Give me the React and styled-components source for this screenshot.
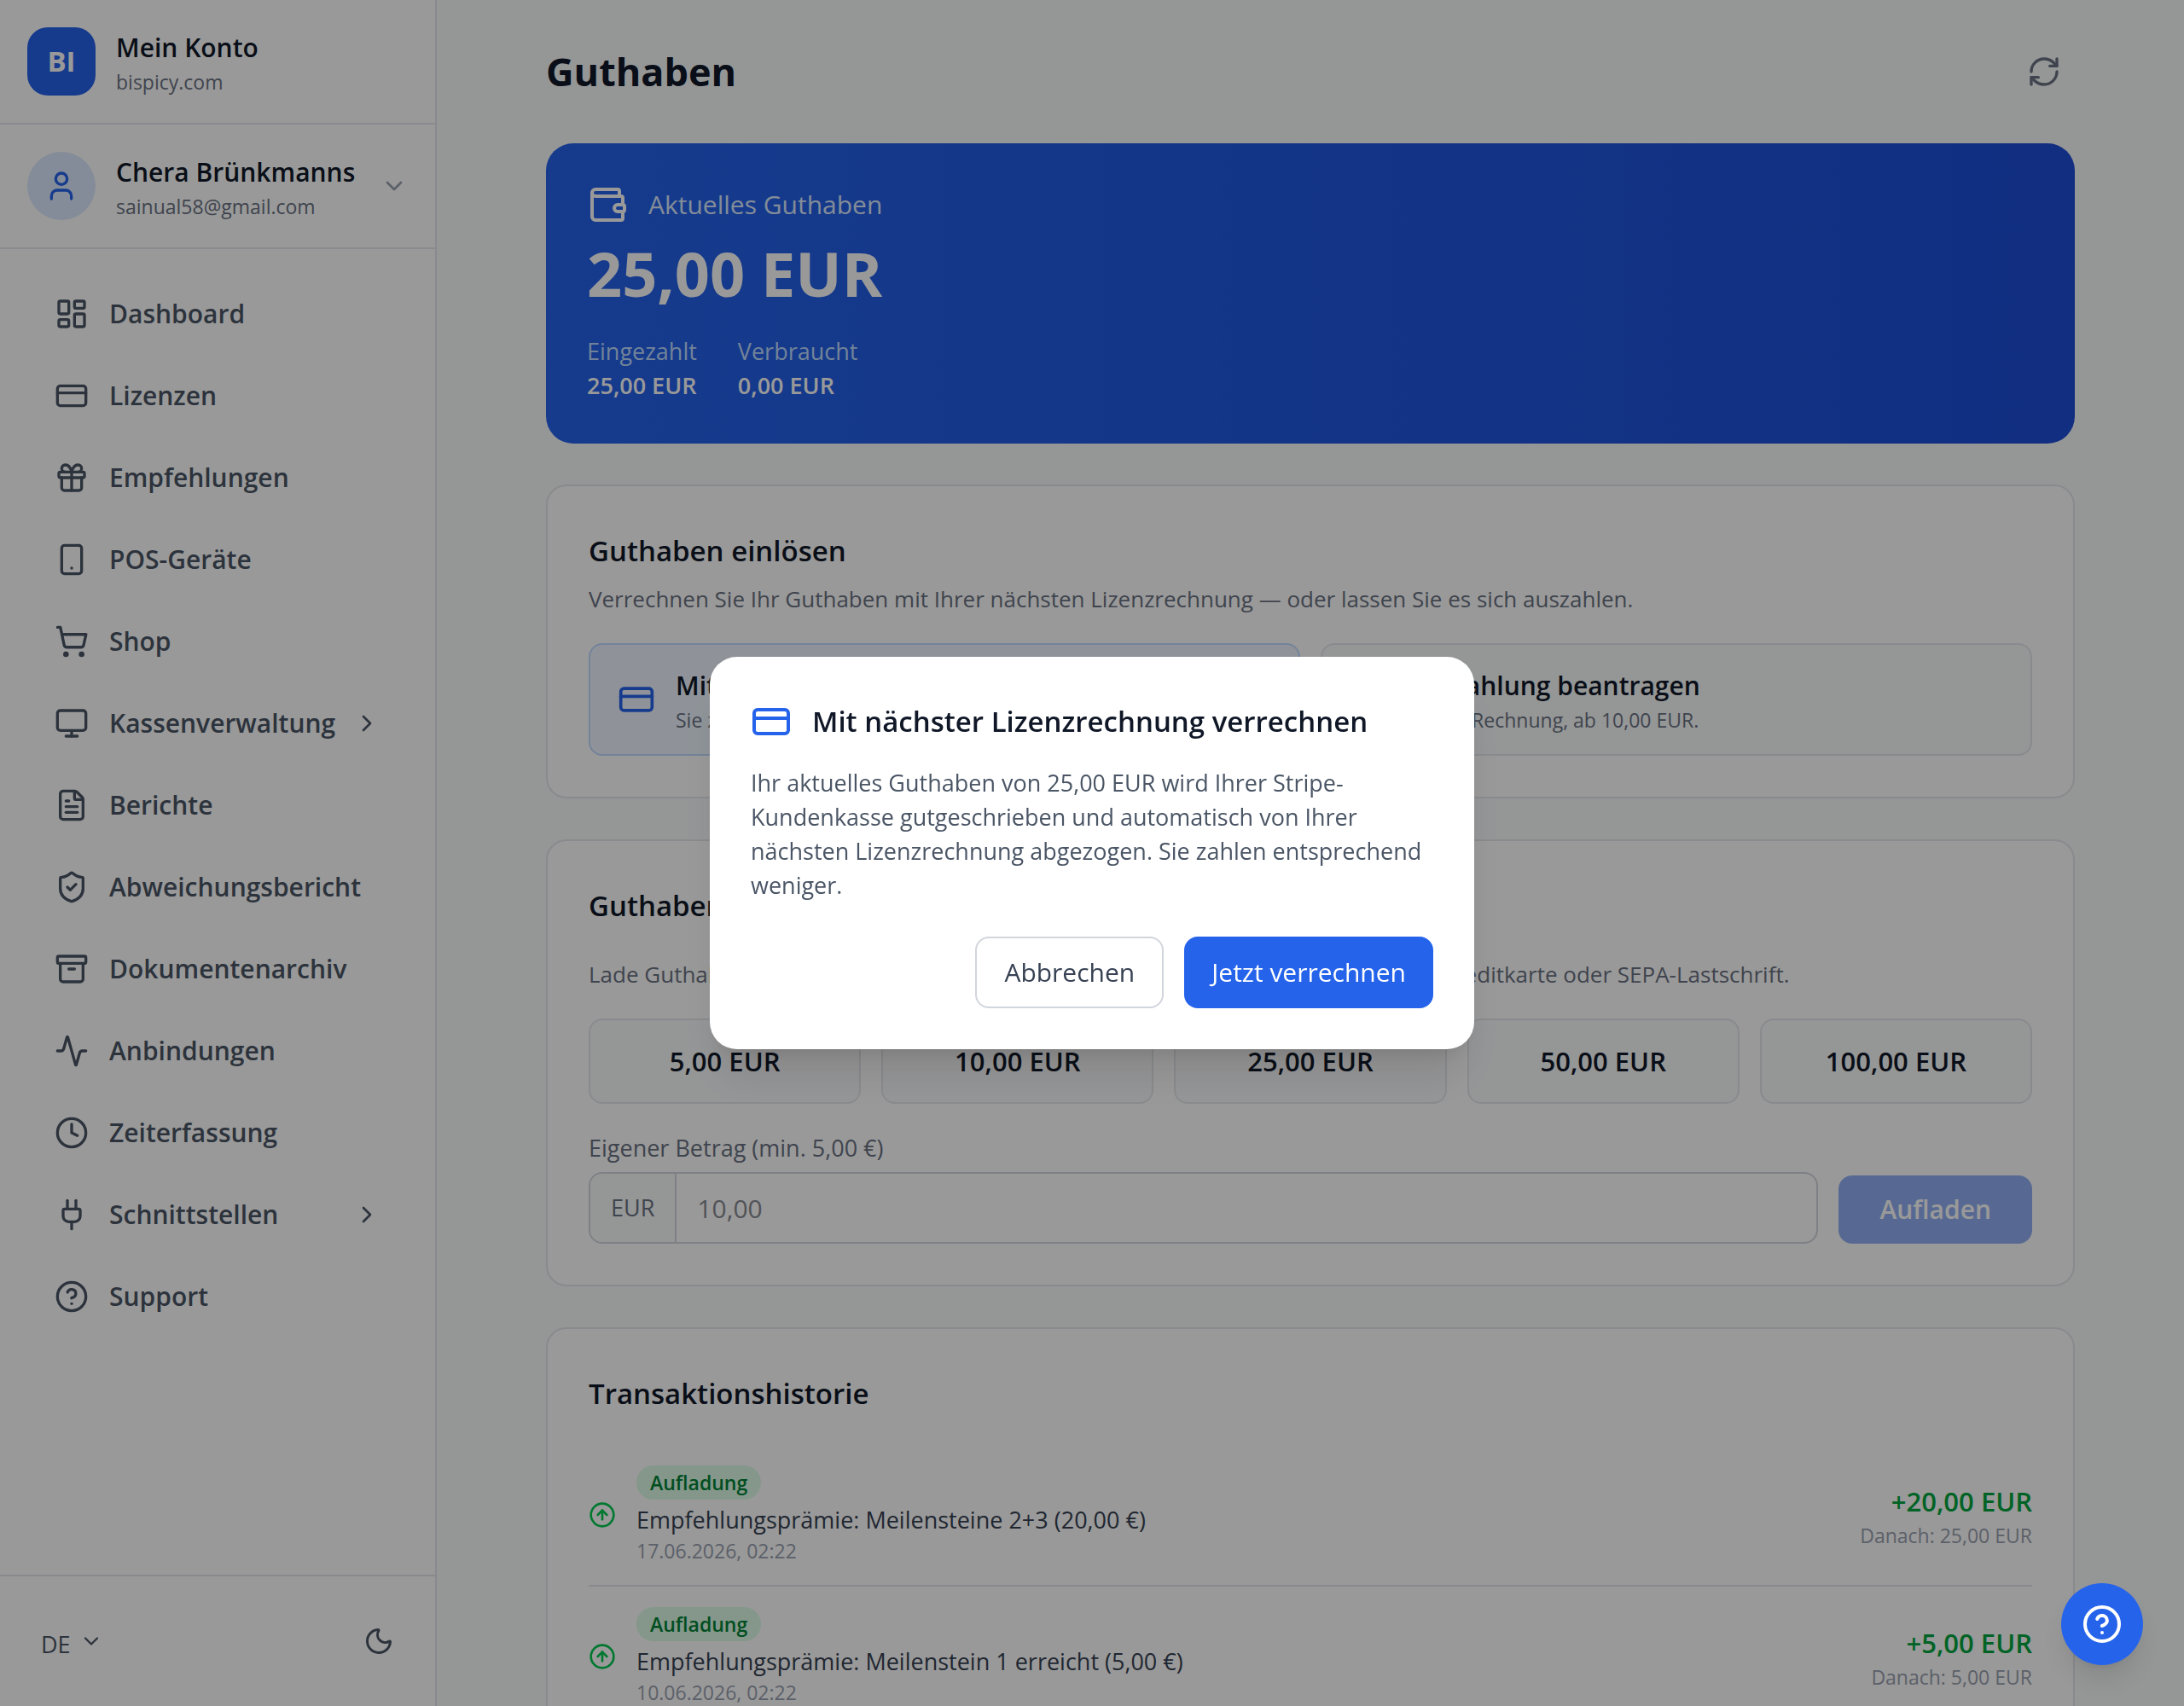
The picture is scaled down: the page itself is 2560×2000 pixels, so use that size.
import React, { useState } from 'react';
import styled, { createGlobalStyle, css } from 'styled-components';
import {
	Activity,
	Archive,
	Banknote,
	ChevronDown,
	ChevronRight,
	CircleArrowUp,
	CircleQuestionMark,
	Clock,
	CreditCard,
	FileText,
	Gift,
	LayoutDashboard,
	Monitor,
	Moon,
	Plug,
	RefreshCw,
	ShieldCheck,
	ShoppingCart,
	Smartphone,
	User,
	Wallet,
} from 'lucide-react';

const navItems = [
	{ label: 'Dashboard', icon: LayoutDashboard },
	{ label: 'Lizenzen', icon: CreditCard },
	{ label: 'Empfehlungen', icon: Gift },
	{ label: 'POS-Geräte', icon: Smartphone },
	{ label: 'Shop', icon: ShoppingCart },
	{ label: 'Kassenverwaltung', icon: Monitor, nested: true },
	{ label: 'Berichte', icon: FileText },
	{ label: 'Abweichungsbericht', icon: ShieldCheck },
	{ label: 'Dokumentenarchiv', icon: Archive },
	{ label: 'Anbindungen', icon: Activity },
	{ label: 'Zeiterfassung', icon: Clock },
	{ label: 'Schnittstellen', icon: Plug, nested: true },
	{ label: 'Support', icon: CircleQuestionMark },
];

const presets = ['5,00 EUR', '10,00 EUR', '25,00 EUR', '50,00 EUR', '100,00 EUR'];

const transactions = [
	{
		id: 2,
		type: 'Aufladung',
		text: 'Empfehlungsprämie: Meilensteine 2+3 (20,00 €)',
		date: '17.06.2026, 02:22',
		amount: '+20,00 EUR',
		after: 'Danach: 25,00 EUR',
	},
	{
		id: 1,
		type: 'Aufladung',
		text: 'Empfehlungsprämie: Meilenstein 1 erreicht (5,00 €)',
		date: '10.06.2026, 02:22',
		amount: '+5,00 EUR',
		after: 'Danach: 5,00 EUR',
	},
];

function Sidebar() {
	return (
		<SidebarWrapper>
			<SidebarHeader>
				<Logo>BI</Logo>
				<div>
					<AccountName>Mein Konto</AccountName>
					<AccountInfo>bispicy.com</AccountInfo>
				</div>
			</SidebarHeader>
			<UserButton type="button">
				<Avatar>
					<User size={40} />
				</Avatar>
				<div className="userText">
					<AccountName>Chera Brünkmanns</AccountName>
					<AccountInfo>sainual58@gmail.com</AccountInfo>
				</div>
				<ChevronDown className="chevron" size={32} />
			</UserButton>
			<Nav>
				{navItems.map(({ label, icon: Icon, nested }) => (
					<NavLink key={label} href="#">
						<Icon size={40} />
						<span>{label}</span>
						{nested && <ChevronRight size={32} />}
					</NavLink>
				))}
			</Nav>
			<SidebarFooter>
				<LanguageButton type="button">
					DE
					<ChevronDown size={28} />
				</LanguageButton>
				<IconButton type="button" aria-label="Dunkles Design">
					<Moon size={36} />
				</IconButton>
			</SidebarFooter>
		</SidebarWrapper>
	);
}

function BalanceCard() {
	return (
		<BalanceWrapper>
			<div className="balanceLabel">
				<Wallet size={48} />
				<span>Aktuelles Guthaben</span>
			</div>
			<p className="balanceAmount">25,00 EUR</p>
			<dl>
				<div>
					<dt>Eingezahlt</dt>
					<dd>25,00 EUR</dd>
				</div>
				<div>
					<dt>Verbraucht</dt>
					<dd>0,00 EUR</dd>
				</div>
			</dl>
		</BalanceWrapper>
	);
}

function RedeemCard({ onSettle }) {
	return (
		<Card>
			<CardTitle>Guthaben einlösen</CardTitle>
			<RedeemText>
				Verrechnen Sie Ihr Guthaben mit Ihrer nächsten Lizenzrechnung — oder lassen Sie es sich auszahlen.
			</RedeemText>
			<OptionGrid>
				<OptionButton type="button" $primary onClick={onSettle}>
					<CreditCard size={44} />
					<div>
						<OptionTitle>Mit nächster Lizenzrechnung verrechnen</OptionTitle>
						<OptionText>Sie zahlen entsprechend weniger.</OptionText>
					</div>
				</OptionButton>
				<OptionButton type="button">
					<Banknote size={44} />
					<div>
						<OptionTitle>Auszahlung beantragen</OptionTitle>
						<OptionText>Gegen Rechnung, ab 10,00 EUR.</OptionText>
					</div>
				</OptionButton>
			</OptionGrid>
		</Card>
	);
}

function TopUpCard() {
	const [amount, setAmount] = useState('');

	return (
		<Card>
			<CardTitle>Guthaben aufladen</CardTitle>
			<TopUpText>
				Lade Guthaben auf, um Lizenzen und Bestellungen zu bezahlen. Zahlung auch per Kreditkarte oder
				SEPA-Lastschrift.
			</TopUpText>
			<PresetGrid>
				{presets.map((preset) => (
					<PresetButton key={preset} type="button" onClick={() => setAmount(preset.replace(' EUR', ''))}>
						{preset}
					</PresetButton>
				))}
			</PresetGrid>
			<AmountForm onSubmit={(e) => e.preventDefault()}>
				<div className="field">
					<label htmlFor="amount">Eigener Betrag (min. 5,00 €)</label>
					<AmountInput>
						<span>EUR</span>
						<input
							id="amount"
							type="text"
							inputMode="decimal"
							placeholder="10,00"
							value={amount}
							onChange={(e) => setAmount(e.target.value)}
						/>
					</AmountInput>
				</div>
				<SubmitButton type="submit" disabled={!amount}>
					Aufladen
				</SubmitButton>
			</AmountForm>
		</Card>
	);
}

function HistoryCard() {
	return (
		<Card>
			<CardTitle>Transaktionshistorie</CardTitle>
			<TransactionList>
				{transactions.map((t) => (
					<Transaction key={t.id}>
						<CircleArrowUp size={32} />
						<div className="details">
							<Badge>{t.type}</Badge>
							<p className="text">{t.text}</p>
							<p className="small">{t.date}</p>
						</div>
						<div className="sum">
							<p className="amount">{t.amount}</p>
							<p className="small">{t.after}</p>
						</div>
					</Transaction>
				))}
			</TransactionList>
		</Card>
	);
}

function SettleDialog({ onClose }) {
	return (
		<Overlay>
			<Dialog role="dialog" aria-modal="true" aria-labelledby="dialog-title">
				<div className="dialogHead">
					<CreditCard size={48} />
					<h2 id="dialog-title">Mit nächster Lizenzrechnung verrechnen</h2>
				</div>
				<p className="dialogText">
					Ihr aktuelles Guthaben von 25,00 EUR wird Ihrer Stripe-Kundenkasse gutgeschrieben und automatisch von
					Ihrer nächsten Lizenzrechnung abgezogen. Sie zahlen entsprechend weniger.
				</p>
				<div className="dialogActions">
					<CancelButton type="button" onClick={onClose}>
						Abbrechen
					</CancelButton>
					<ConfirmButton type="button" onClick={onClose}>
						Jetzt verrechnen
					</ConfirmButton>
				</div>
			</Dialog>
		</Overlay>
	);
}

export default function App() {
	const [dialogOpen, setDialogOpen] = useState(true);

	return (
		<>
			<GlobalStyle />
			<Layout>
				<Sidebar />
				<Main>
					<Content>
						<PageHeader>
							<h1>Guthaben</h1>
							<IconButton type="button" $muted aria-label="Aktualisieren">
								<RefreshCw size={40} />
							</IconButton>
						</PageHeader>
						<BalanceCard />
						<RedeemCard onSettle={() => setDialogOpen(true)} />
						<TopUpCard />
						<HistoryCard />
					</Content>
				</Main>
			</Layout>
			{dialogOpen && <SettleDialog onClose={() => setDialogOpen(false)} />}
			<HelpButton type="button" aria-label="Hilfe">
				<CircleQuestionMark size={48} />
			</HelpButton>
		</>
	);
}

const GlobalStyle = createGlobalStyle`
	* {
		box-sizing: border-box;
	}
	body {
		margin: 0;
		background-color: #f9fafb;
		color: #101828;
		font-family: 'Segoe UI', 'Open Sans', 'Noto Sans', sans-serif;
		font-size: 30px;
		line-height: 48px;
	}
	h1, h2, p, dl, dd, ul {
		margin: 0;
		padding: 0;
	}
	button, input {
		font: inherit;
		color: inherit;
	}
	button {
		border: none;
		background: none;
		cursor: pointer;
	}
	svg {
		flex-shrink: 0;
	}
`;

const Layout = styled.div`
	display: flex;
	height: 100vh;
`;

const SidebarWrapper = styled.aside`
	display: flex;
	flex-direction: column;
	flex: 0 0 512px;
	min-width: 0;
	border-right: 2px solid #e5e7eb;
	background-color: #fff;
`;

const headRow = css`
	display: flex;
	align-items: center;
	gap: 24px;
	padding: 32px;
	border-bottom: 2px solid #e5e7eb;
`;

const SidebarHeader = styled.div`
	${headRow}
`;

const UserButton = styled.button`
	${headRow}
	text-align: left;
	.userText {
		flex: 1;
		min-width: 0;
		white-space: nowrap;
	}
	.chevron {
		color: #99a1af;
	}
`;

const Logo = styled.div`
	display: flex;
	align-items: center;
	justify-content: center;
	width: 80px;
	height: 80px;
	border-radius: 24px;
	background-color: #2563eb;
	color: #fff;
	font-size: 33px;
	font-weight: 700;
`;

const Avatar = styled.div`
	display: flex;
	align-items: center;
	justify-content: center;
	width: 80px;
	height: 80px;
	border-radius: 50%;
	background-color: #dbeafe;
	color: #2563eb;
`;

const AccountName = styled.div`
	font-weight: 600;
`;

const AccountInfo = styled.div`
	color: #6a7282;
	font-size: 23px;
	line-height: 32px;
`;

const Nav = styled.nav`
	display: flex;
	flex: 1;
	flex-direction: column;
	gap: 8px;
	padding: 32px;
	overflow: hidden;
`;

const NavLink = styled.a`
	display: flex;
	align-items: center;
	gap: 24px;
	padding: 20px 32px;
	border-radius: 16px;
	color: #4a5565;
	font-weight: 600;
	text-decoration: none;
	span {
		flex: 1;
		min-width: 0;
	}
`;

const SidebarFooter = styled.div`
	display: flex;
	align-items: center;
	justify-content: space-between;
	padding: 42px 32px;
	border-top: 2px solid #e5e7eb;
	color: #4a5565;
`;

const LanguageButton = styled.button`
	display: flex;
	align-items: baseline;
	gap: 10px;
	padding: 12px 16px 4px;
	font-size: 27px;
	font-weight: 500;
`;

const IconButton = styled.button`
	display: flex;
	padding: 16px;
	border-radius: 16px;
	color: ${(props) => (props.$muted ? '#6a7282' : '#4a5565')};
`;

const Main = styled.main`
	flex: 1;
	min-width: 0;
	padding: 48px;
	overflow-y: auto;
	scrollbar-width: none;
`;

const Content = styled.div`
	display: flex;
	flex-direction: column;
	gap: 48px;
	max-width: 1792px;
	margin: 0 auto;
`;

const PageHeader = styled.header`
	display: flex;
	align-items: center;
	justify-content: space-between;
	h1 {
		font-size: 45px;
		font-weight: 700;
		line-height: 64px;
	}
`;

const BalanceWrapper = styled.section`
	padding: 48px;
	border-radius: 32px;
	background: linear-gradient(to right, #2563eb, #1d4ed8);
	color: #fff;
	.balanceLabel {
		display: flex;
		align-items: center;
		gap: 24px;
		margin-bottom: 16px;
	}
	.balanceLabel span {
		color: #dbeafe;
	}
	.balanceAmount {
		font-size: 72px;
		font-weight: 700;
		line-height: 80px;
	}
	dl {
		display: flex;
		gap: 48px;
		margin-top: 32px;
		font-size: 27px;
		line-height: 40px;
	}
	dt {
		color: #bedbff;
	}
	dd {
		font-weight: 600;
	}
`;

const Card = styled.section`
	padding: 48px;
	border: 2px solid #e5e7eb;
	border-radius: 24px;
	background-color: #fff;
`;

const CardTitle = styled.h2`
	font-size: 33px;
	font-weight: 600;
	line-height: 56px;
`;

const CardText = styled.p`
	margin-bottom: 32px;
	color: #6a7282;
	font-size: 26px;
	line-height: 40px;
`;

const RedeemText = styled(CardText)`
	margin-top: 8px;
`;

const TopUpText = styled(CardText)`
	margin-top: 32px;
`;

const OptionGrid = styled.div`
	display: grid;
	grid-template-columns: 1fr 1fr;
	gap: 24px;
`;

const OptionButton = styled.button`
	display: flex;
	align-items: center;
	gap: 24px;
	padding: 24px 32px;
	border: 2px solid ${(props) => (props.$primary ? '#bedbff' : '#e5e7eb')};
	border-radius: 16px;
	background-color: ${(props) => (props.$primary ? '#eff6ff' : '#f9fafb')};
	text-align: left;
	svg {
		color: ${(props) => (props.$primary ? '#2563eb' : '#4a5565')};
	}
`;

const OptionTitle = styled.div`
	font-weight: 600;
`;

const OptionText = styled.div`
	color: #6a7282;
	font-size: 23px;
	line-height: 32px;
`;

const PresetGrid = styled.div`
	display: grid;
	grid-template-columns: repeat(5, 1fr);
	gap: 24px;
	margin-bottom: 32px;
`;

const PresetButton = styled.button`
	padding: 24px;
	border: 2px solid #e5e7eb;
	border-radius: 16px;
	background-color: #f9fafb;
	font-size: 31px;
	font-weight: 600;
`;

const AmountForm = styled.form`
	display: flex;
	align-items: flex-end;
	gap: 24px;
	.field {
		flex: 1;
	}
	label {
		display: block;
		margin-bottom: 8px;
		color: #6a7282;
		font-size: 27px;
		line-height: 40px;
	}
`;

const AmountInput = styled.div`
	display: flex;
	border: 2px solid #d1d5dc;
	border-radius: 16px;
	overflow: hidden;
	span {
		display: flex;
		align-items: center;
		padding: 0 24px;
		border-right: 2px solid #d1d5dc;
		background-color: #f9fafb;
		color: #6a7282;
		font-size: 27px;
	}
	input {
		flex: 1;
		min-width: 0;
		height: 80px;
		padding: 16px 24px;
		border: none;
		outline: none;
		background: none;
	}
	input::placeholder {
		color: #888b93;
	}
`;

const SubmitButton = styled.button`
	padding: 16px 48px;
	border-radius: 16px;
	background-color: #2563eb;
	color: #fff;
	font-weight: 600;
	&:disabled {
		opacity: 0.5;
	}
`;

const TransactionList = styled.ul`
	margin-top: 32px;
	list-style: none;
`;

const Transaction = styled.li`
	display: flex;
	align-items: center;
	gap: 24px;
	padding: 24px 0;
	& + & {
		border-top: 2px solid #e5e7eb;
	}
	svg {
		color: #00c950;
	}
	.details {
		flex: 1;
		min-width: 0;
	}
	.sum {
		text-align: right;
	}
	.text {
		color: #364153;
		font-size: 27px;
		line-height: 40px;
	}
	.amount {
		color: #00a63e;
		font-size: 31px;
		font-weight: 600;
	}
	.small {
		color: #99a1af;
		font-size: 23px;
		line-height: 32px;
	}
`;

const Badge = styled.span`
	display: block;
	width: fit-content;
	margin-bottom: 4px;
	padding: 4px 16px;
	border-radius: 20px;
	background-color: #dcfce7;
	color: #008236;
	font-size: 23px;
	font-weight: 600;
	line-height: 32px;
`;

const Overlay = styled.div`
	position: fixed;
	inset: 0;
	display: flex;
	align-items: center;
	justify-content: center;
	padding: 32px;
	background-color: rgba(0, 0, 0, 0.4);
`;

const Dialog = styled.div`
	width: 100%;
	max-width: 896px;
	padding: 48px;
	border-radius: 32px;
	background-color: #fff;
	box-shadow: 0 40px 50px -10px rgba(0, 0, 0, 0.1), 0 16px 20px -12px rgba(0, 0, 0, 0.1);
	.dialogHead {
		display: flex;
		align-items: center;
		gap: 24px;
		margin-bottom: 24px;
	}
	.dialogHead svg {
		color: #2563eb;
	}
	.dialogHead h2 {
		font-size: 33px;
		font-weight: 600;
		line-height: 56px;
	}
	.dialogText {
		margin-bottom: 40px;
		color: #4a5565;
		font-size: 27px;
		line-height: 40px;
	}
	.dialogActions {
		display: flex;
		justify-content: flex-end;
		gap: 24px;
	}
`;

const DialogButton = styled.button`
	padding: 16px 32px;
	border-radius: 16px;
`;

const CancelButton = styled(DialogButton)`
	border: 2px solid #d1d5dc;
	color: #364153;
`;

const ConfirmButton = styled(DialogButton)`
	background-color: #2563eb;
	color: #fff;
`;

const HelpButton = styled.button`
	position: fixed;
	right: 48px;
	bottom: 48px;
	display: flex;
	align-items: center;
	justify-content: center;
	width: 96px;
	height: 96px;
	border-radius: 50%;
	background-color: #2563eb;
	color: #fff;
	box-shadow: 0 20px 30px -6px rgba(0, 0, 0, 0.1), 0 8px 12px -8px rgba(0, 0, 0, 0.1);
`;
